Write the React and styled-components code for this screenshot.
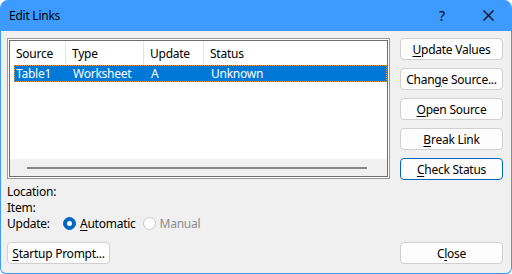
import React from 'react';
import styled, { createGlobalStyle } from 'styled-components';

const Global = createGlobalStyle`
  html, body {
    margin: 0;
    padding: 0;
    background: #ffffff;
  }
  * {
    box-sizing: border-box;
  }
`;

const Window = styled.div`
  width: 512px;
  height: 274px;
  display: flex;
  flex-direction: column;
  border: 1px solid #3d9bff;
  border-top: none;
  border-radius: 8px 8px 6px 6px;
  overflow: hidden;
  background: #f0f0f0;
  font-family: 'Noto Sans', 'Open Sans', sans-serif;
  font-size: 12px;
  letter-spacing: -0.25px;
  color: #000;
`;

const TitleBar = styled.div`
  height: 31px;
  flex: none;
  display: flex;
  align-items: center;
  background: #3d9bff;
  padding-left: 9px;
  padding-right: 1px;
  margin: 0 -1px;
`;

const Title = styled.div`
  flex: 1;
  font-size: 12px;
  margin-top: -1px;
`;

const TitleButton = styled.div`
  width: 46px;
  height: 31px;
  display: flex;
  align-items: center;
  justify-content: center;
  font-size: 14px;
`;

const Body = styled.div`
  flex: 1;
  display: flex;
  flex-direction: column;
  padding: 7px 7px 9px 6px;
`;

const TopRow = styled.div`
  display: flex;
  gap: 10px;
`;

const ListBox = styled.div`
  width: 383px;
  height: 141px;
  border: 1px solid #9a9a9a;
  box-shadow: inset 0 0 0 1px #ffffff, inset 0 0 0 2px #6e6e6e;
  background: #fff;
  padding: 2px;
  display: flex;
  flex-direction: column;
`;

const HeaderRow = styled.div`
  display: flex;
  height: 24px;
  flex: none;
`;

const HeaderCell = styled.div`
  width: ${p => p.w}px;
  padding-left: 6px;
  display: flex;
  align-items: center;
  border-right: ${p => (p.last ? 'none' : '1px solid #e5e5e5')};
`;

const Rows = styled.div`
  flex: 1;
  padding-left: 4px;
`;

const Row = styled.div`
  display: flex;
  height: 17px;
  align-items: center;
  background: ${p => (p.selected ? '#0078d7' : 'transparent')};
  color: ${p => (p.selected ? '#fff' : '#000')};
  outline: ${p => (p.selected ? '1px dotted #f2a33a' : 'none')};
  outline-offset: -1px;
`;

const Cell = styled.div`
  width: ${p => p.w}px;
  padding-left: ${p => p.pad}px;
  white-space: nowrap;
`;

const HScroll = styled.div`
  height: 17px;
  flex: none;
  background: #f0f0f0;
  display: flex;
  align-items: center;
  padding-left: 17px;
`;

const Thumb = styled.div`
  width: 340px;
  height: 2px;
  background: #858585;
`;

const ButtonCol = styled.div`
  display: flex;
  flex-direction: column;
  gap: 8px;
`;

const Button = styled.button`
  width: 103px;
  height: 22px;
  padding: 0;
  font-family: inherit;
  font-size: 12px;
  letter-spacing: inherit;
  color: #000;
  background: #fdfdfd;
  border: 1px solid ${p => (p.primary ? '#0067c0' : '#d0d0d0')};
  border-radius: 4px;
  display: flex;
  align-items: center;
  justify-content: center;
`;

const Key = styled.span`
  text-decoration: underline;
  text-underline-offset: 2px;
`;

const Info = styled.div`
  margin-top: 3px;
  display: flex;
  flex-direction: column;
`;

const Line = styled.div`
  height: 16px;
  display: flex;
  align-items: center;
`;

const Label = styled.div`
  width: 56px;
`;

const Radio = styled.div`
  display: flex;
  align-items: center;
  gap: 4px;
  margin-right: 7px;
  color: ${p => (p.disabled ? '#8d8d8d' : '#000')};
`;

const RadioDot = styled.div`
  width: 13px;
  height: 13px;
  border-radius: 50%;
  background: ${p => (p.checked ? '#0067c0' : '#fff')};
  border: 1px solid ${p => (p.checked ? '#0067c0' : '#c9c9c9')};
  display: flex;
  align-items: center;
  justify-content: center;

  &::after {
    content: '';
    display: ${p => (p.checked ? 'block' : 'none')};
    width: 5px;
    height: 5px;
    border-radius: 50%;
    background: #fff;
  }
`;

const BottomRow = styled.div`
  margin-top: auto;
  display: flex;
  justify-content: space-between;
  padding-right: 1px;
`;

const cols = [56, 78, 60, 180];

export default function App() {
  return (
    <>
      <Global />
      <Window>
        <TitleBar>
          <Title>Edit Links</Title>
          <TitleButton>?</TitleButton>
          <TitleButton>
            <svg width="11" height="11" viewBox="0 0 11 11">
              <path d="M0.5 0.5 L10.5 10.5 M10.5 0.5 L0.5 10.5" stroke="#000" strokeWidth="1.1" />
            </svg>
          </TitleButton>
        </TitleBar>
        <Body>
          <TopRow>
            <ListBox>
              <HeaderRow>
                <HeaderCell w={cols[0]}>Source</HeaderCell>
                <HeaderCell w={cols[1]}>Type</HeaderCell>
                <HeaderCell w={cols[2]}>Update</HeaderCell>
                <HeaderCell w={cols[3]} last>Status</HeaderCell>
              </HeaderRow>
              <Rows>
                <Row selected>
                  <Cell w={cols[0] - 4} pad={2}>Table1</Cell>
                  <Cell w={cols[1]} pad={7}>Worksheet</Cell>
                  <Cell w={cols[2]} pad={7}>A</Cell>
                  <Cell w={cols[3]} pad={7}>Unknown</Cell>
                </Row>
              </Rows>
              <HScroll>
                <Thumb />
              </HScroll>
            </ListBox>
            <ButtonCol>
              <Button><span><Key>U</Key>pdate Values</span></Button>
              <Button><span>Chan<Key>g</Key>e Source...</span></Button>
              <Button><span><Key>O</Key>pen Source</span></Button>
              <Button><span><Key>B</Key>reak Link</span></Button>
              <Button primary><span><Key>C</Key>heck Status</span></Button>
            </ButtonCol>
          </TopRow>
          <Info>
            <Line>Location:</Line>
            <Line>Item:</Line>
            <Line>
              <Label>Update:</Label>
              <Radio>
                <RadioDot checked />
                <span><Key>A</Key>utomatic</span>
              </Radio>
              <Radio disabled>
                <RadioDot />
                <span>Manual</span>
              </Radio>
            </Line>
          </Info>
          <BottomRow>
            <Button><span><Key>S</Key>tartup Prompt...</span></Button>
            <Button><span>C<Key>l</Key>ose</span></Button>
          </BottomRow>
        </Body>
      </Window>
    </>
  );
}
